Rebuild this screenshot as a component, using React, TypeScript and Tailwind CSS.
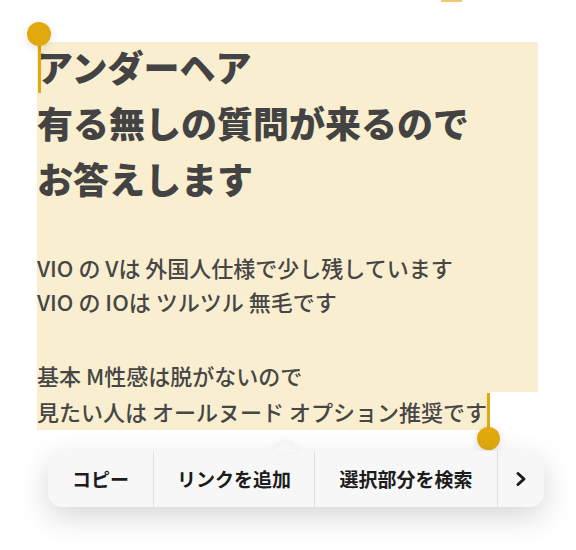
import React from 'react';

const App: React.FC = () => {
  return (
    <div className="relative w-[576px] h-[550px] overflow-hidden bg-white font-['Noto_Sans_CJK_JP',sans-serif] text-[#464646]">
      {/* partially visible handle at the top */}
      <div className="absolute left-[441px] top-0 w-[21px] h-[2px] bg-[#f3c872]" />

      <div className="pt-[42px] pl-[37px]">
        {/* selected block */}
        <div className="w-[501px] h-[350px] bg-[#f9eecf] flex flex-col">
          <h1 className="-mt-[4px] text-[36px] leading-[56px] font-black text-[#434343]">
            アンダーヘア
            <br />
            有る無しの質問が来るので
            <br />
            お答えします
          </h1>
          <p className="mt-[44px] text-[22px] leading-[34px] font-medium">
            VIO の Vは 外国人仕様で少し残しています
            <br />
            VIO の IOは ツルツル 無毛です
          </p>
          <p className="mt-[40px] text-[22px] leading-[34px] font-medium">基本 M性感は脱がないので</p>
        </div>
        <div className="w-[451px] whitespace-nowrap bg-[#f9eecf] text-[22px] leading-[38px] font-medium">
          見たい人は オールヌード オプション推奨です
        </div>
      </div>

      {/* selection handles */}
      <div className="absolute left-[38px] top-[34px] w-[3px] h-[59px] bg-[#e2a90f]" />
      <div className="absolute left-[27px] top-[22px] w-[24px] h-[24px] rounded-full bg-[#e2a90f] shadow-[0_2px_8px_rgba(0,0,0,0.12)]" />
      <div className="absolute left-[487px] top-[393px] w-[3px] h-[40px] bg-[#e2a90f]" />
      <div className="absolute left-[477px] top-[427px] w-[23px] h-[23px] rounded-full bg-[#e2a90f] shadow-[0_2px_8px_rgba(0,0,0,0.12)]" />

      {/* edit menu */}
      <div className="absolute left-[48px] top-[451px] w-[496px] h-[56px] rounded-[14px] bg-[#f7f7f7] shadow-[0_10px_30px_rgba(0,0,0,0.16)] flex text-[19px] font-semibold text-[#1c1c1c]">
        <svg className="absolute left-[224px] -top-[10px] drop-shadow-[0_-2px_3px_rgba(0,0,0,0.06)]" width="26" height="11" viewBox="0 0 26 11">
          <path d="M0 11 L11 1.5 Q13 0 15 1.5 L26 11 Z" fill="#f7f7f7" />
        </svg>
        <div className="w-[105px] flex items-center justify-center">コピー</div>
        <div className="w-px bg-[#e0e0e0]" />
        <div className="w-[160px] flex items-center justify-center">リンクを追加</div>
        <div className="w-px bg-[#e0e0e0]" />
        <div className="w-[182px] flex items-center justify-center">選択部分を検索</div>
        <div className="w-px bg-[#e0e0e0]" />
        <div className="flex-1 flex items-center justify-center">
          <svg width="12" height="16" viewBox="0 0 12 16">
            <path d="M3 2.5 L9 8 L3 13.5" fill="none" stroke="#1c1c1c" strokeWidth="3" strokeLinecap="round" strokeLinejoin="round" />
          </svg>
        </div>
      </div>
    </div>
  );
};

export default App;
